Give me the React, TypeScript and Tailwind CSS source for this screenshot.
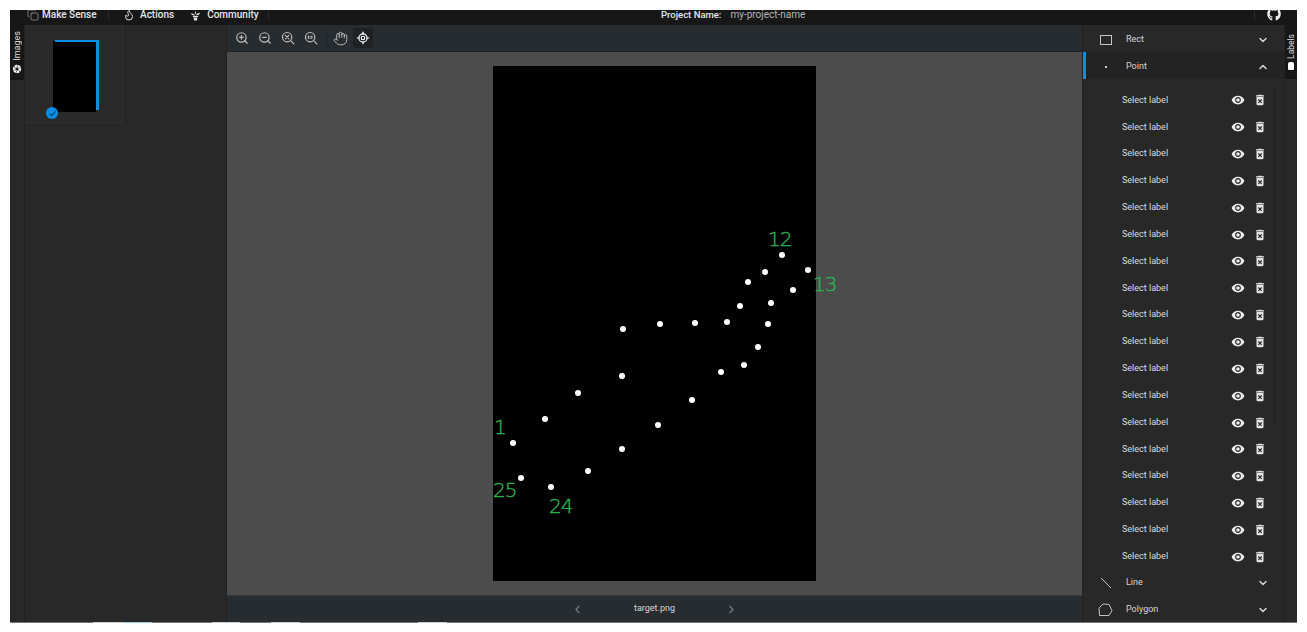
import React from "react";
import { ChevronDown, ChevronUp, ChevronLeft, ChevronRight, Copy, Flame, Hand, LocateFixed, ZoomIn, ZoomOut } from "lucide-react";
import { FaGithub } from "react-icons/fa";
import { MdCamera, MdCheck, MdDeleteForever, MdVisibility } from "react-icons/md";

const points = [
  [513, 443], [545, 419], [578, 393], [622, 376], [623, 329], [660, 324], [695, 323], [727, 322],
  [740, 306], [748, 282], [765, 272], [782, 255], [808, 270], [793, 290], [771, 303], [768, 324],
  [758, 347], [744, 365], [721, 372], [692, 400], [658, 425], [622, 449], [588, 471], [551, 487], [521, 478],
];

const notes = [
  { text: "12", x: 768, y: 246, size: 20 },
  { text: "13", x: 813, y: 291, size: 20 },
  { text: "1", x: 494, y: 434, size: 20 },
  { text: "25", x: 493, y: 497, size: 20 },
  { text: "24", x: 549, y: 513, size: 20 },
];

const rows = Array.from({ length: 18 }, (_, i) => i);

const ZoomReset = () => (
  <svg width="14" height="14" viewBox="0 0 24 24" fill="none" stroke="currentColor" strokeWidth="2" strokeLinecap="round">
    <circle cx="10.5" cy="10.5" r="8" />
    <path d="M7.5 7.5l6 6M13.5 7.5l-6 6M17 17l5 5" />
  </svg>
);

const ZoomFit = () => (
  <svg width="14" height="14" viewBox="0 0 24 24" fill="none" stroke="currentColor" strokeWidth="2" strokeLinecap="round">
    <circle cx="10.5" cy="10.5" r="8" />
    <path d="M7.5 8.5v4M13.5 8.5v4M10.5 9v.5M10.5 12v.5M17 17l5 5" />
  </svg>
);

const Plant = () => (
  <svg width="11" height="11" viewBox="0 0 24 24" fill="currentColor">
    <path d="M6 13h12l-1 3H7zM8 17h8l-1 6H9zM11 12C10 8 6 8 2 7c1 3 4 5 9 5zM13 12c1-4 5-5 9-6-1 4-4 6-9 6zM11 9c0-3 0-5 1-8 1 3 1 5 1 8z" />
  </svg>
);

const ToolHeader = ({ icon, label, open, active }: { icon: React.ReactNode; label: string; open?: boolean; active?: boolean }) => (
  <div className={`flex h-[27px] shrink-0 items-center border-l-[3px] pt-[2px] ${active ? "border-[#0a8fe6] bg-[#232323]" : "border-transparent"}`}>
    <div className="flex w-[40px] justify-center pr-[1px] text-[#c4c4c4]">{icon}</div>
    <span className="text-[9px] text-[#d6d6d6]">{label}</span>
    <div className="ml-auto pr-[15px] text-[#d6d6d6]">
      {open ? <ChevronUp size={12} strokeWidth={3} /> : <ChevronDown size={12} strokeWidth={3} />}
    </div>
  </div>
);

const LabelRow = () => (
  <div className="flex h-[26.85px] shrink-0 items-center pl-[39px] text-[#dcdcdc]">
    <span className="w-[109px] text-[9px]">Select label</span>
    <MdVisibility size={14} className="text-[#ececec]" />
    <MdDeleteForever size={14} className="ml-[8px] text-[#e4e4e4]" />
  </div>
);

export default function App() {
  return (
    <div className="flex h-[632px] w-[1307px] flex-col bg-white px-[10px] pt-[10px] font-['Roboto',sans-serif]">
      <div className="flex h-[612px] w-[1287px] flex-col overflow-hidden bg-[#282828]">
        {/* top bar */}
        <div className="flex h-[15px] shrink-0 items-center overflow-hidden bg-[#171717] pb-[5px] leading-none text-[#e6e6e6]">
          <div className="flex h-full w-[99px] items-center border-r border-[#2a2a2a] pl-[17px]">
            <Copy size={12} strokeWidth={1.25} className="shrink-0 text-[#b5b5b5]" />
            <span className="ml-[3px] text-[10px] font-medium whitespace-nowrap">Make Sense</span>
          </div>
          <div className="flex h-full w-[160px] items-center border-r border-[#2a2a2a] pl-[14px]">
            <Flame size={12} className="shrink-0 text-[#d8d8d8]" />
            <span className="ml-[5px] text-[10px] font-medium">Actions</span>
            <span className="ml-[16px] text-[#e6e6e6]"><Plant /></span>
            <span className="ml-[6px] text-[10px] font-medium">Community</span>
          </div>
          <div className="ml-[392px] flex items-center whitespace-nowrap">
            <span className="text-[9.5px] font-medium">Project Name:</span>
            <span className="ml-[9px] text-[10px] text-[#b5b5b5]">my-project-name</span>
          </div>
          <div className="ml-auto flex h-full w-[43px] items-center border-l border-[#2a2a2a] pl-[12px]">
            <FaGithub size={14} className="-mt-[2px] text-[#f0f0f0]" />
          </div>
        </div>

        <div className="flex min-h-0 flex-1">
          {/* left tab */}
          <div className="w-[15px] shrink-0 border-r border-[#222]">
            <div className="flex h-[55px] flex-col items-center justify-center gap-[3px] bg-[#171717] text-[#d8d8d8]">
              <span className="[writing-mode:vertical-rl] rotate-180 text-[9px] leading-none">Images</span>
              <MdCamera size={10} className="text-white" />
            </div>
          </div>

          {/* images column */}
          <div className="w-[202px] shrink-0 border-r border-[#222]">
            <div className="relative flex h-[101px] w-[101px] items-center justify-center border-r border-b border-[#232323] bg-[#2a2a2a] pr-[1px] pt-[2px]">
              <div className="h-[70px] w-[43px] bg-black" />
              <div className="absolute top-[15px] left-[30px] h-[70px] w-[44px] border-t-[2px] border-r-[3px] border-[#0a8fe6]" />
              <div className="absolute top-[15px] left-[28px] h-[70px] w-[43px] translate-y-[2px] bg-black" />
              <div className="absolute top-[82px] left-[21px] flex h-[12px] w-[12px] items-center justify-center rounded-full bg-[#0a8fe6]">
                <MdCheck size={9} className="text-[#10304a]" />
              </div>
            </div>
          </div>

          {/* canvas */}
          <div className="flex min-w-0 flex-1 flex-col">
            <div className="flex h-[27px] shrink-0 items-center border-b border-[#222] bg-[#272c30] pl-[8px] text-[#c0c0c0]">
              <div className="flex w-[92px]">
                <div className="flex w-[23px]"><ZoomIn size={14} /></div>
                <div className="flex w-[23px]"><ZoomOut size={14} /></div>
                <div className="flex w-[23px]"><ZoomReset /></div>
                <div className="flex w-[23px]"><ZoomFit /></div>
              </div>
              <div className="h-[20px] w-px bg-[#23272a]" />
              <div className="ml-[3px] flex w-[19px] justify-center"><Hand size={15} strokeWidth={1.5} /></div>
              <div className="ml-[3px] flex h-[20px] w-[20px] items-center justify-center rounded-[2px] bg-[#1e2225] text-white">
                <LocateFixed size={14} />
              </div>
            </div>
            <div className="flex min-h-0 flex-1 items-center justify-center bg-[#4c4c4c]">
              <div className="h-[515px] w-[323px] bg-black">
                <svg width="323" height="515" viewBox="493 66 323 515" className="overflow-visible">
                  {points.map(([x, y]) => (
                    <circle key={`${x}-${y}`} cx={x} cy={y} r="3" fill="#fff" />
                  ))}
                  {notes.map((n) => (
                    <text key={n.text} x={n.x} y={n.y} fontSize={n.size} fill="#2bb24f" stroke="#2bb24f" strokeWidth="0.4" fontFamily="'DejaVu Sans', sans-serif" fontWeight={200} letterSpacing="-1">
                      {n.text}
                    </text>
                  ))}
                </svg>
              </div>
            </div>
            <div className="flex h-[27px] shrink-0 items-center justify-center border-t border-[#3a3a3a] bg-[#272c30] text-[#7d8184]">
              <ChevronLeft size={13} />
              <span className="mx-[44.5px] w-[52px] text-center text-[9px] text-[#d6d6d6]">target.png</span>
              <ChevronRight size={13} />
            </div>
          </div>

          {/* right panel */}
          <div className="relative flex w-[202px] shrink-0 flex-col border-l border-[#222]">
            <ToolHeader label="Rect" icon={<span className="block h-[10px] w-[12px] border border-[#c4c4c4]" />} />
            <ToolHeader label="Point" active open icon={<span className="block h-[2px] w-[2px] rounded-full bg-white" />} />
            <div className="flex min-h-0 flex-1 flex-col pt-[8px]">
              {rows.map((i) => (
                <LabelRow key={i} />
              ))}
            </div>
            <div className="absolute top-[62px] right-[8px] h-[338px] w-[3px] bg-[#242424]" />
            <ToolHeader
              label="Line"
              icon={
                <svg width="12" height="12" viewBox="0 0 12 12" stroke="#c4c4c4" strokeWidth="1">
                  <path d="M1 1l10 10" />
                </svg>
              }
            />
            <ToolHeader
              label="Polygon"
              icon={
                <svg width="15" height="14" viewBox="0 0 15 14" fill="none" stroke="#c4c4c4" strokeWidth="1">
                  <path d="M1.5 12.5L1 5l4-4 6 .5 3 6-3 5z" />
                </svg>
              }
            />
          </div>

          {/* right tab */}
          <div className="w-[13px] shrink-0 border-l border-[#222]">
            <div className="flex h-[54px] flex-col items-center justify-center gap-[3px] bg-[#171717] text-[#d8d8d8]">
              <span className="[writing-mode:vertical-rl] rotate-180 text-[8.5px] leading-none">Labels</span>
              <span className="block h-[8px] w-[6px] rounded-t-[2px] rounded-b-[1px] bg-white" />
            </div>
          </div>
        </div>
      </div>
      <div className="flex h-px w-[1287px] bg-[#777]">
        <div className="ml-[83px] w-[30px] bg-[#ccc]" />
        <div className="w-[29px] bg-[#9cc9e0]" />
        <div className="ml-[60px] w-[28px] bg-[#ccc]" />
        <div className="ml-[31px] w-[29px] bg-[#ccc]" />
        <div className="ml-[118px] w-[29px] bg-[#ccc]" />
      </div>
    </div>
  );
}
